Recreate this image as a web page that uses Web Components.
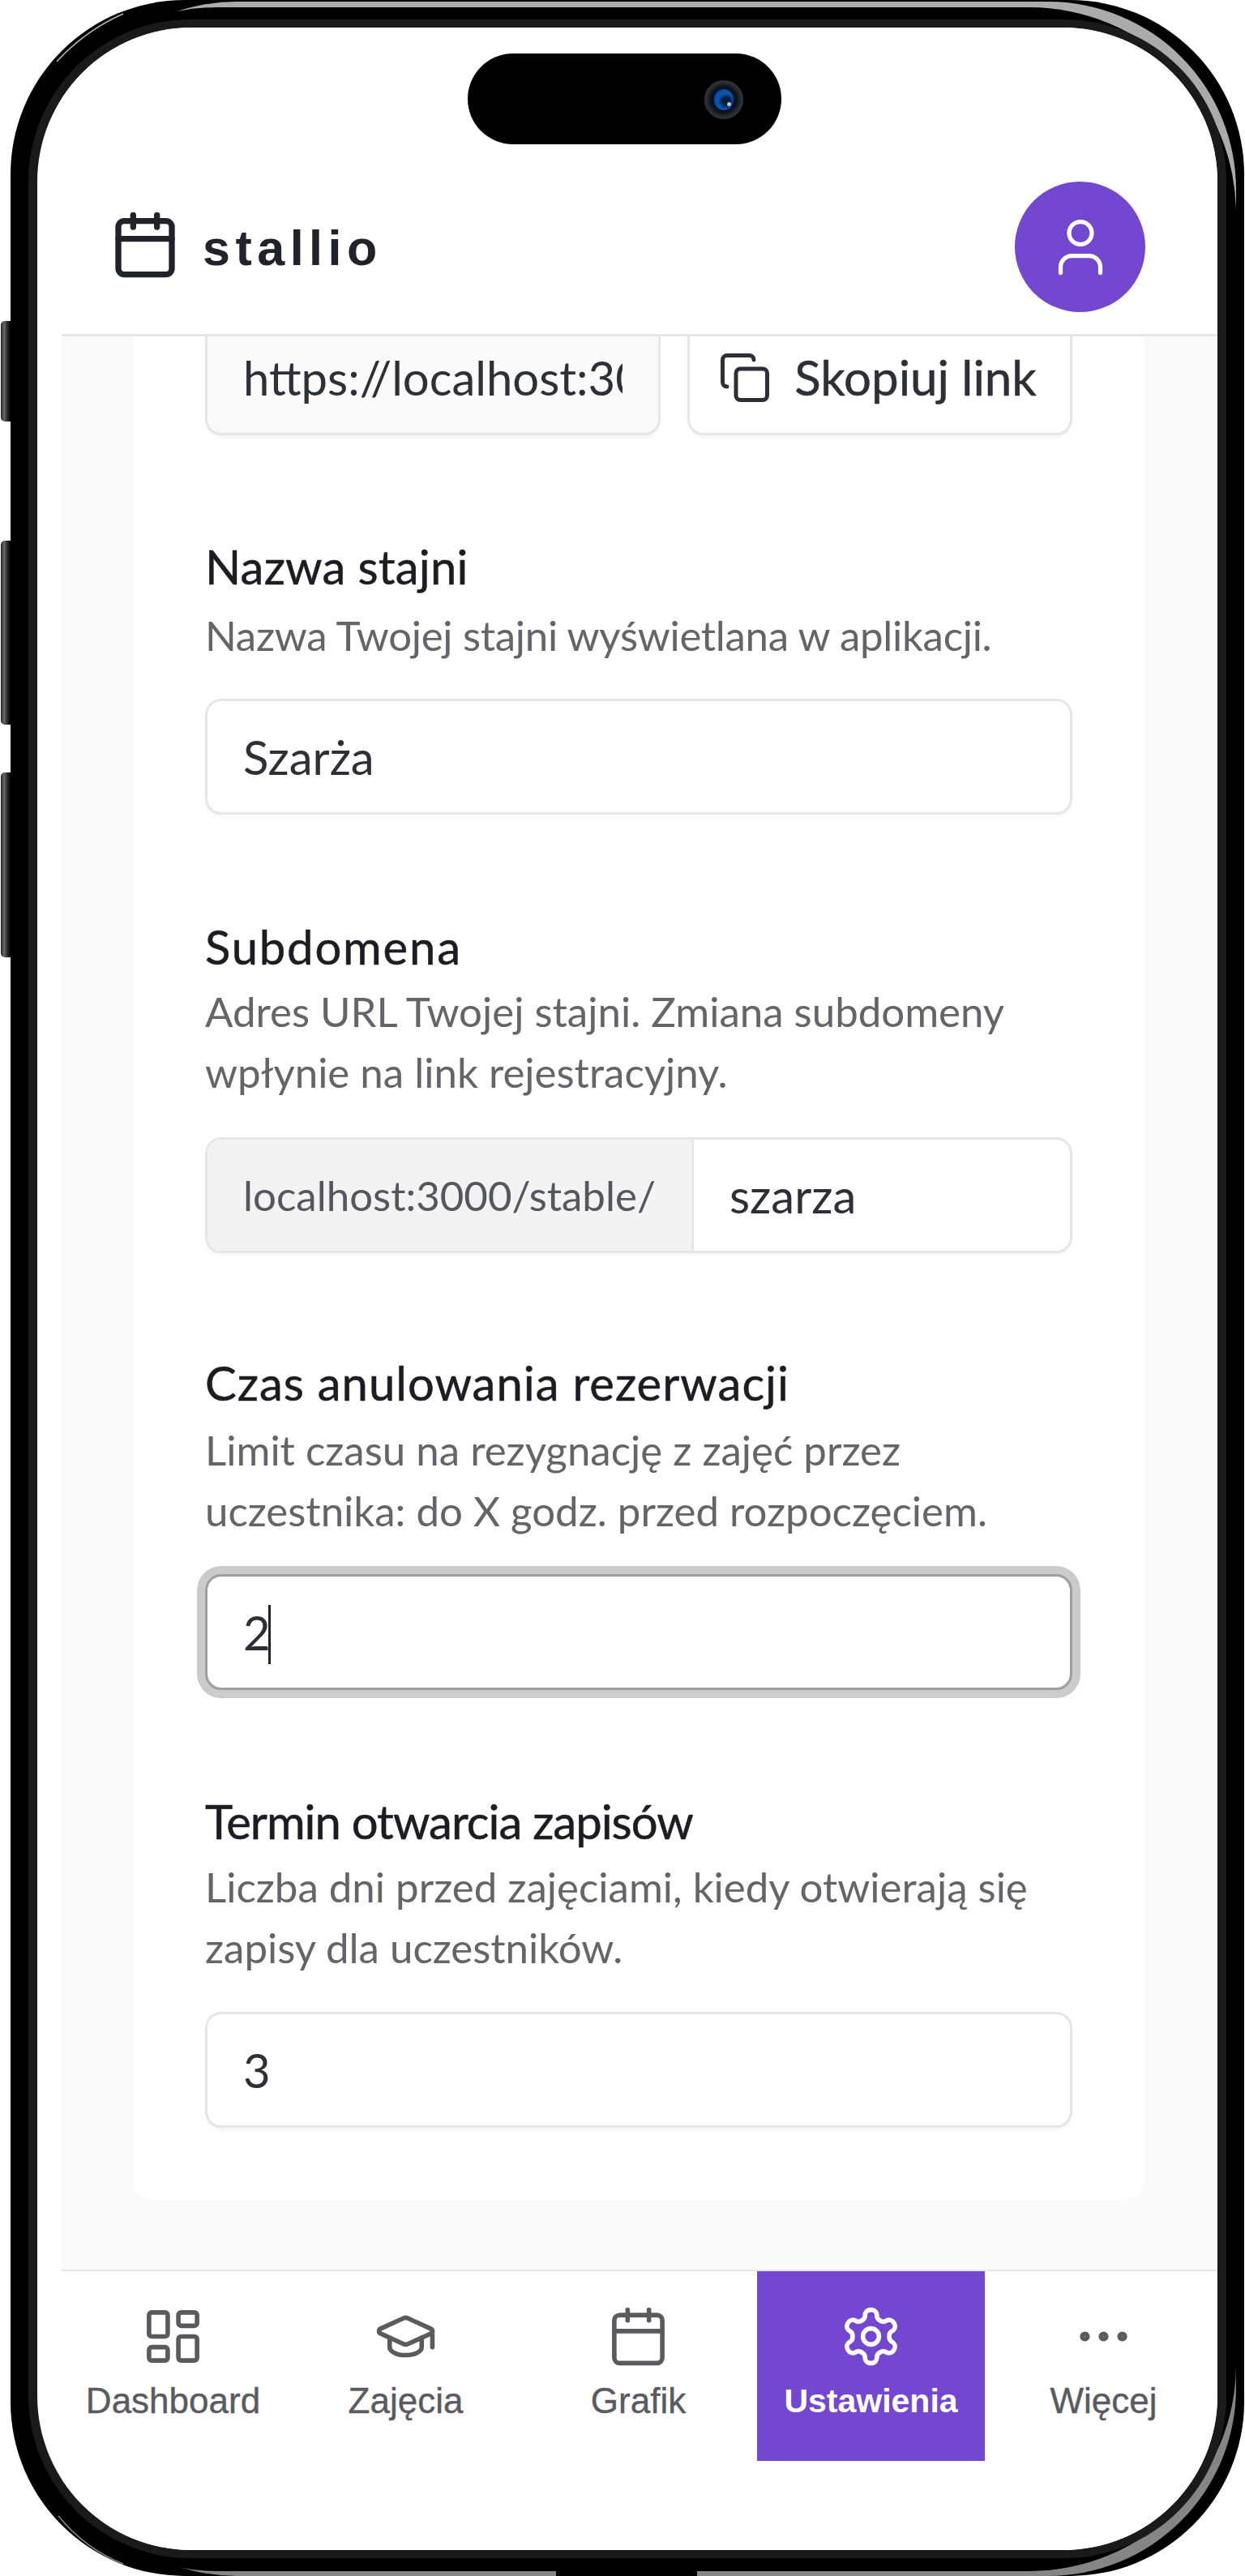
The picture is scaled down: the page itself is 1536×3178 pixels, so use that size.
<!DOCTYPE html>
<html lang="pl">
<head>
<meta charset="utf-8">
<title>stallio</title>
<style>
  html, body { margin: 0; background: #fff; }
  body { font-family: Lato, "Liberation Sans", sans-serif; color: #1f1f26; }
</style>
</head>
<body>
<phone-frame>
  <app-header name="stallio"></app-header>
  <settings-page>
    <link-row value="https://localhost:30"></link-row>
    <settings-field label="Nazwa stajni" style="--top: 132px; --label-gap: 17px; --gap: 41px; --label-spacing: .2px; --hint-spacing: -.3px">
      <span slot="hint">Nazwa Twojej stajni wyświetlana w aplikacji.</span>
      <text-box value="Szarża"></text-box>
    </settings-field>
    <settings-field label="Subdomena" style="--top: 133px; --label-gap: 12px; --gap: 43px; --label-spacing: 1.8px">
      <span slot="hint">Adres URL Twojej stajni. Zmiana subdomeny<br>wpłynie na link rejestracyjny.</span>
      <text-box value="szarza" prefix="localhost:3000/stable/"></text-box>
    </settings-field>
    <settings-field label="Czas anulowania rezerwacji" style="--top: 130px; --label-gap: 15px; --gap: 41px; --label-spacing: 1px">
      <span slot="hint">Limit czasu na rezygnację z zajęć przez<br>uczestnika: do X godz. przed rozpoczęciem.</span>
      <text-box value="2" focused></text-box>
    </settings-field>
    <settings-field label="Termin otwarcia zapisów" style="--top: 132px; --label-gap: 13px; --gap: 42px; --label-spacing: -1px">
      <span slot="hint">Liczba dni przed zajęciami, kiedy otwierają się<br>zapisy dla uczestników.</span>
      <text-box value="3"></text-box>
    </settings-field>
  </settings-page>
  <nav-bar>
    <nav-item label="Dashboard" icon="dashboard"></nav-item>
    <nav-item label="Zajęcia" icon="cap"></nav-item>
    <nav-item label="Grafik" icon="calendar"></nav-item>
    <nav-item label="Ustawienia" icon="settings" active></nav-item>
    <nav-item label="Więcej" icon="more"></nav-item>
  </nav-bar>
</phone-frame>

<script>
const icons = {
  calendar: '<path d="M8 2v4"/><path d="M16 2v4"/><rect x="3" y="4" width="18" height="18" rx="2"/><path d="M3 10h18"/>',
  user: '<path d="M19 21v-2a4 4 0 0 0-4-4H9a4 4 0 0 0-4 4v2"/><circle cx="12" cy="7" r="4"/>',
  copy: '<rect x="8" y="8" width="14" height="14" rx="2"/><path d="M4 16c-1.1 0-2-.9-2-2V4c0-1.1.9-2 2-2h10c1.1 0 2 .9 2 2"/>',
  dashboard: '<rect x="3" y="3" width="7" height="9" rx="1"/><rect x="14" y="3" width="7" height="5" rx="1"/><rect x="14" y="12" width="7" height="9" rx="1"/><rect x="3" y="16" width="7" height="5" rx="1"/>',
  cap: '<path d="M21.42 10.922a1 1 0 0 0-.019-1.838L12.83 5.18a2 2 0 0 0-1.66 0L2.6 9.08a1 1 0 0 0 0 1.832l8.57 3.908a2 2 0 0 0 1.66 0z"/><path d="M22 10v6"/><path d="M6 12.5V16a6 3 0 0 0 12 0v-3.5"/>',
  settings: '<path d="M12.22 2h-.44a2 2 0 0 0-2 2v.18a2 2 0 0 1-1 1.73l-.43.25a2 2 0 0 1-2 0l-.15-.08a2 2 0 0 0-2.73.73l-.22.38a2 2 0 0 0 .73 2.73l.15.1a2 2 0 0 1 1 1.72v.51a2 2 0 0 1-1 1.74l-.15.09a2 2 0 0 0-.73 2.73l.22.38a2 2 0 0 0 2.73.73l.15-.08a2 2 0 0 1 2 0l.43.25a2 2 0 0 1 1 1.73V20a2 2 0 0 0 2 2h.44a2 2 0 0 0 2-2v-.18a2 2 0 0 1 1-1.73l.43-.25a2 2 0 0 1 2 0l.15.08a2 2 0 0 0 2.73-.73l.22-.39a2 2 0 0 0-.73-2.73l-.15-.08a2 2 0 0 1-1-1.74v-.5a2 2 0 0 1 1-1.74l.15-.09a2 2 0 0 0 .73-2.73l-.22-.38a2 2 0 0 0-2.73-.73l-.15.08a2 2 0 0 1-2 0l-.43-.25a2 2 0 0 1-1-1.73V4a2 2 0 0 0-2-2z"/><circle cx="12" cy="12" r="3"/>',
  more: '<circle cx="12" cy="12" r="1"/><circle cx="19" cy="12" r="1"/><circle cx="5" cy="12" r="1"/>'
};

const svgIcon = (name, size, stroke = 2) =>
  `<svg width="${size}" height="${size}" viewBox="0 0 24 24" fill="none" stroke="currentColor" stroke-width="${stroke}" stroke-linecap="round" stroke-linejoin="round" aria-hidden="true">${icons[name]}</svg>`;

const frameTemplate = document.createElement('template');
frameTemplate.innerHTML = `
  <style>
    :host {
      display: block;
      position: relative;
      width: 1536px;
      height: 3178px;
      box-sizing: border-box;
      padding: 34px 34px 32px 46px;
      overflow: hidden;
    }
    #body { position: absolute; top: 0; left: 0; }
    #screen {
      position: relative;
      display: flex;
      flex-direction: column;
      height: 100%;
      padding-left: 30px;
      box-sizing: border-box;
      background: #fff;
      border-radius: 190px;
      overflow: hidden;
    }
    #island {
      position: absolute;
      top: 66px;
      left: 577px;
      width: 387px;
      height: 112px;
      border-radius: 56px;
      background: #000;
    }
    #lens {
      position: absolute;
      top: 33px;
      left: 292px;
      width: 48px;
      height: 48px;
      border-radius: 50%;
      background: radial-gradient(circle at 50% 50%, #07101c 0 44%, #2a2c30 62%, #4a4b4e 100%);
    }
    #lens::before {
      content: '';
      position: absolute;
      top: 11px;
      left: 12px;
      width: 24px;
      height: 26px;
      border-radius: 50%;
      background: radial-gradient(circle at 62% 58%, #04203c 0 22%, #0a58b8 48%, #063a80 100%);
    }
    #lens::after {
      content: '';
      position: absolute;
      top: 27px;
      left: 28px;
      width: 5px;
      height: 5px;
      border-radius: 50%;
      background: #b8c4cc;
    }
  </style>
  <svg id="body" width="1536" height="3178" viewBox="0 0 1536 3178" aria-hidden="true">
    <defs>
      <linearGradient id="edge" x1="0" y1="0" x2="0" y2="1">
        <stop offset="0.5" stop-color="#ababab"/>
        <stop offset="0.5" stop-color="#858585"/>
      </linearGradient>
      <linearGradient id="key" x1="0" y1="0" x2="1" y2="0">
        <stop offset="0" stop-color="#222"/>
        <stop offset="0.2" stop-color="#6a6a6a"/>
        <stop offset="0.4" stop-color="#2a2a2a"/>
        <stop offset="0.6" stop-color="#050505"/>
      </linearGradient>
    </defs>
    <rect x="1" y="396" width="20" height="124" rx="5" fill="url(#key)"/>
    <rect x="1" y="667" width="20" height="227" rx="5" fill="url(#key)"/>
    <rect x="1" y="953" width="20" height="228" rx="5" fill="url(#key)"/>
    <rect x="13" y="0" width="1522" height="3178" rx="215" fill="#000"/>
    <rect x="60" y="2" width="1465" height="3176" rx="232" fill="url(#edge)"/>
    <rect x="13" y="9" width="1512" height="3163" rx="255" fill="#000"/>
    <rect x="686" y="3172" width="174" height="6" fill="#000"/>
    <path d="M70 76C92 52 118 32 152 17" fill="none" stroke="#b5b5b5" stroke-width="1.5"/>
    <path d="M72 3104C92 3128 118 3150 152 3163" fill="none" stroke="#8a8a8a" stroke-width="1.5"/>
    <rect x="35" y="24" width="1478" height="3132" rx="200" fill="#1a1a1a"/>
  </svg>
  <div id="screen"><slot></slot></div>
  <div id="island"><div id="lens"></div></div>
`;

class PhoneFrame extends HTMLElement {
  connectedCallback() {
    if (this.shadowRoot) return;
    this.attachShadow({mode: 'open'});
    this.shadowRoot.appendChild(frameTemplate.content.cloneNode(true));
  }
}

class AppHeader extends HTMLElement {
  connectedCallback() {
    if (this.shadowRoot) return;
    this.attachShadow({mode: 'open'});
    this.shadowRoot.innerHTML = `
      <style>
        :host {
          display: flex;
          flex: none;
          align-items: center;
          justify-content: space-between;
          height: 381px;
          padding: 166px 89px 0 59px;
          box-sizing: border-box;
          border-bottom: 3px solid #e6e6e6;
          background: #fff;
        }
        #brand { display: flex; align-items: center; gap: 27px; color: #22222b; }
        #brand svg { display: block; margin-top: -8px; }
        #name {
          font-family: "Liberation Sans", sans-serif;
          font-size: 61px;
          font-weight: 700;
          letter-spacing: 6.5px;
          line-height: 80px;
        }
        #avatar {
          display: flex;
          align-items: center;
          justify-content: center;
          width: 161px;
          height: 161px;
          margin-top: -3px;
          border-radius: 50%;
          background: #7347cf;
          color: #fff;
        }
      </style>
      <div id="brand">${svgIcon('calendar', 88)}<span id="name">${this.getAttribute('name')}</span></div>
      <div id="avatar">${svgIcon('user', 84, 1.5)}</div>
    `;
  }
}

class SettingsPage extends HTMLElement {
  connectedCallback() {
    if (this.shadowRoot) return;
    this.attachShadow({mode: 'open'});
    this.shadowRoot.innerHTML = `
      <style>
        :host {
          display: block;
          flex: none;
          height: 2385px;
          background: #fafafa;
          overflow: hidden;
        }
        #card {
          height: 2320px;
          margin: -21px 90px 0 88px;
          padding: 0 89px;
          border-radius: 0 0 26px 26px;
          background: #fff;
        }
      </style>
      <div id="card"><slot></slot></div>
    `;
  }
}

const boxStyles = `
  box-sizing: border-box;
  height: 143px;
  border: 3px solid #e6e6e6;
  border-radius: 20px;
  box-shadow: 0 3px 4px rgba(0, 0, 0, 0.04);
  font-size: 58px;
  line-height: 137px;
  color: #2f2f37;
`;

class LinkRow extends HTMLElement {
  connectedCallback() {
    if (this.shadowRoot) return;
    this.attachShadow({mode: 'open'});
    this.shadowRoot.innerHTML = `
      <style>
        :host { display: flex; gap: 33px; }
        #url {
          ${boxStyles}
          width: 562px;
          padding: 0 44px 0 44px;
          background: #fafafa;
          white-space: nowrap;
        }
        #clip { display: block; overflow: hidden; }
        #copy {
          ${boxStyles}
          display: flex;
          align-items: center;
          justify-content: center;
          gap: 28px;
          flex: 1;
          background: #fff;
          font-size: 60px;
          -webkit-text-stroke: .5px currentColor;
        }
        #copy svg { margin-left: -6px; }
      </style>
      <div id="url"><span id="clip">${this.getAttribute('value')}</span></div>
      <div id="copy">${svgIcon('copy', 66, 1.8)}<span>Skopiuj link</span></div>
    `;
  }
}

class SettingsField extends HTMLElement {
  connectedCallback() {
    if (this.shadowRoot) return;
    this.attachShadow({mode: 'open'});
    this.shadowRoot.innerHTML = `
      <style>
        :host { display: block; padding-top: var(--top, 132px); }
        #label {
          font-size: 58px;
          line-height: 60px;
          color: #1c1c22;
          letter-spacing: var(--label-spacing, 0);
          -webkit-text-stroke: .5px currentColor;
          margin-bottom: var(--label-gap, 15px);
        }
        #hint {
          font-size: 51px;
          line-height: 75px;
          color: #646469;
          letter-spacing: var(--hint-spacing, 0);
          margin-bottom: var(--gap, 41px);
        }
      </style>
      <div id="label">${this.getAttribute('label')}</div>
      <div id="hint"><slot name="hint"></slot></div>
      <slot></slot>
    `;
  }
}

class TextBox extends HTMLElement {
  connectedCallback() {
    if (this.shadowRoot) return;
    const prefix = this.getAttribute('prefix');
    const focused = this.hasAttribute('focused');
    this.attachShadow({mode: 'open'});
    this.shadowRoot.innerHTML = `
      <style>
        :host {
          ${boxStyles}
          display: flex;
          background: #fff;
          overflow: ${focused ? 'visible' : 'hidden'};
        }
        :host([focused]) {
          border-color: #9e9e9e;
          box-shadow: 0 0 0 10px #cbcbcb;
        }
        #prefix {
          flex: none;
          width: 600px;
          padding-left: 44px;
          box-sizing: border-box;
          border-right: 3px solid #e6e6e6;
          background: #f3f3f3;
          color: #56565e;
          font-size: 51px;
          border-radius: 17px 0 0 17px;
        }
        #value { padding-left: 44px; }
        #caret {
          display: inline-block;
          width: 3px;
          height: 73px;
          margin-left: -3px;
          vertical-align: -17px;
          background: #22222b;
        }
      </style>
      ${prefix ? `<div id="prefix">${prefix}</div>` : ''}
      <div id="value">${this.getAttribute('value')}${focused ? '<i id="caret"></i>' : ''}</div>
    `;
  }
}

class NavBar extends HTMLElement {
  connectedCallback() {
    if (this.shadowRoot) return;
    this.attachShadow({mode: 'open'});
    this.shadowRoot.innerHTML = `
      <style>
        :host {
          display: block;
          flex: 1;
          border-top: 2px solid #e6e6e6;
          background: #fff;
        }
        #items {
          display: grid;
          grid-template-columns: repeat(5, 281px);
          gap: 6px;
          margin-left: -3px;
        }
      </style>
      <div id="items"><slot></slot></div>
    `;
  }
}

class NavItem extends HTMLElement {
  connectedCallback() {
    if (this.shadowRoot) return;
    this.attachShadow({mode: 'open'});
    this.shadowRoot.innerHTML = `
      <style>
        :host {
          display: flex;
          flex-direction: column;
          align-items: center;
          height: 234px;
          padding-top: 41px;
          box-sizing: border-box;
          color: #5a5a5f;
        }
        :host([active]) { background: #7347cf; color: #fff; }
        svg { display: block; }
        span {
          margin-top: 14px;
          font-family: "Liberation Sans", sans-serif;
          font-size: 44px;
          line-height: 52px;
          -webkit-text-stroke: .4px currentColor;
        }
        :host([active]) span { font-weight: 700; font-size: 41px; -webkit-text-stroke: 0; }
      </style>
      ${svgIcon(this.getAttribute('icon'), 79, 1.7)}
      <span>${this.getAttribute('label')}</span>
    `;
  }
}

customElements.define('phone-frame', PhoneFrame);
customElements.define('app-header', AppHeader);
customElements.define('settings-page', SettingsPage);
customElements.define('link-row', LinkRow);
customElements.define('settings-field', SettingsField);
customElements.define('text-box', TextBox);
customElements.define('nav-bar', NavBar);
customElements.define('nav-item', NavItem);
</script>
</body>
</html>
